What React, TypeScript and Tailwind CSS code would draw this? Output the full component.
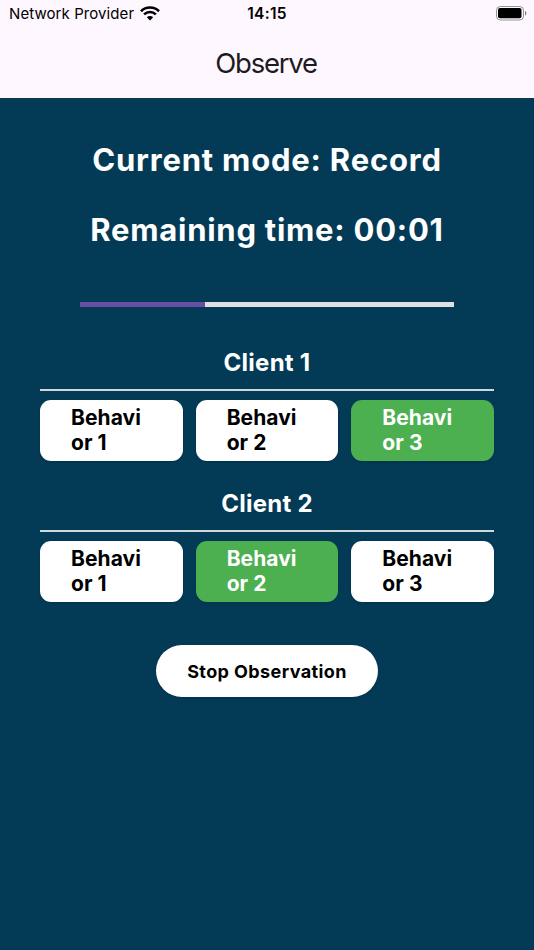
const clients = [
  { name: "Client 1", active: 3 },
  { name: "Client 2", active: 2 },
];

function Wifi() {
  return (
    <svg width="20" height="15" viewBox="0 0 20 15" className="ml-[5px]" fill="none" stroke="#000" strokeWidth="2.6">
      <path d="M1 5.2C6 .3 14 .3 19 5.2" />
      <path d="M4.1 8.4C7.5 5.2 12.5 5.2 15.9 8.4" />
      <path d="M10 14.4 6.8 11.2C8.6 9.6 11.4 9.6 13.2 11.2Z" fill="#000" stroke="none" />
    </svg>
  );
}

function Battery() {
  return (
    <svg width="31" height="15" viewBox="0 0 31 15" fill="none">
      <rect x=".5" y=".5" width="27" height="13.5" rx="3.8" stroke="#000" strokeOpacity=".4" />
      <rect x="2" y="2" width="23.5" height="10.3" rx="2" fill="#000" />
      <path d="M29 5C30.8 5.6 30.8 8.9 29 9.5Z" fill="#000" fillOpacity=".5" />
    </svg>
  );
}

export default function App() {
  return (
    <div className="flex h-[950px] w-[534px] flex-col overflow-hidden bg-[#033a55] font-['Inter',sans-serif] text-white">
      <header className="h-[98px] bg-[#fef7ff] text-black">
        <div className="grid h-[27px] grid-cols-3 items-center">
          <div className="flex items-center pl-[9px] text-[15px] tracking-[0.08px] whitespace-nowrap">
            <span className="w-[126px] pt-px">Network Provider</span>
            <Wifi />
          </div>
          <span className="pt-px text-center text-[15.5px] font-semibold tracking-[0.3px]">14:15</span>
          <div className="flex justify-end pr-[7px]"><Battery /></div>
        </div>
        <h1 className="pt-[15px] pr-[2px] text-center text-[27.5px] leading-[42px] tracking-[-1.25px] text-[#1d1b20]">Observe</h1>
      </header>
      <main className="flex flex-col px-10">
        <p className="mt-[42px] text-center text-[31px] leading-10 font-bold tracking-[0.8px] whitespace-nowrap">Current mode: Record</p>
        <p className="mt-[30px] text-center text-[31px] leading-10 font-bold tracking-[0.75px] whitespace-nowrap">Remaining time: 00:01</p>
        <div className="mx-10 mt-[52px] h-[5px] bg-[#e0e0e0]">
          <div className="h-full w-1/3 bg-[#6750a4]" />
        </div>
        <div className="mt-[37px] flex flex-col gap-[23px]">
          {clients.map((client) => (
            <section key={client.name} className="h-[118px]">
              <h2 className="h-[46px] pt-[5px] text-center text-[24px] leading-[28px] font-bold tracking-[0.25px]">{client.name}</h2>
              <div className="-mt-px h-[1.5px] bg-white/80" />
              <div className="mt-[9.5px] grid grid-cols-3 gap-[13px]">
                {[1, 2, 3].map((n) => (
                  <button key={n} className={`h-[60.5px] rounded-[11px] pl-[31px] text-left text-[21px] leading-[25px] font-bold tracking-[0.05px] shadow-sm ${n === client.active ? "bg-[#4caf50] text-white" : "bg-white text-black"}`}>
                    Behavi<br />or {n}
                  </button>
                ))}
              </div>
            </section>
          ))}
        </div>
        <button className="mx-auto mt-[42px] h-[52px] w-[222px] rounded-full bg-white text-[18px] font-bold tracking-[0.4px] text-black shadow-sm">Stop Observation</button>
      </main>
    </div>
  );
}
